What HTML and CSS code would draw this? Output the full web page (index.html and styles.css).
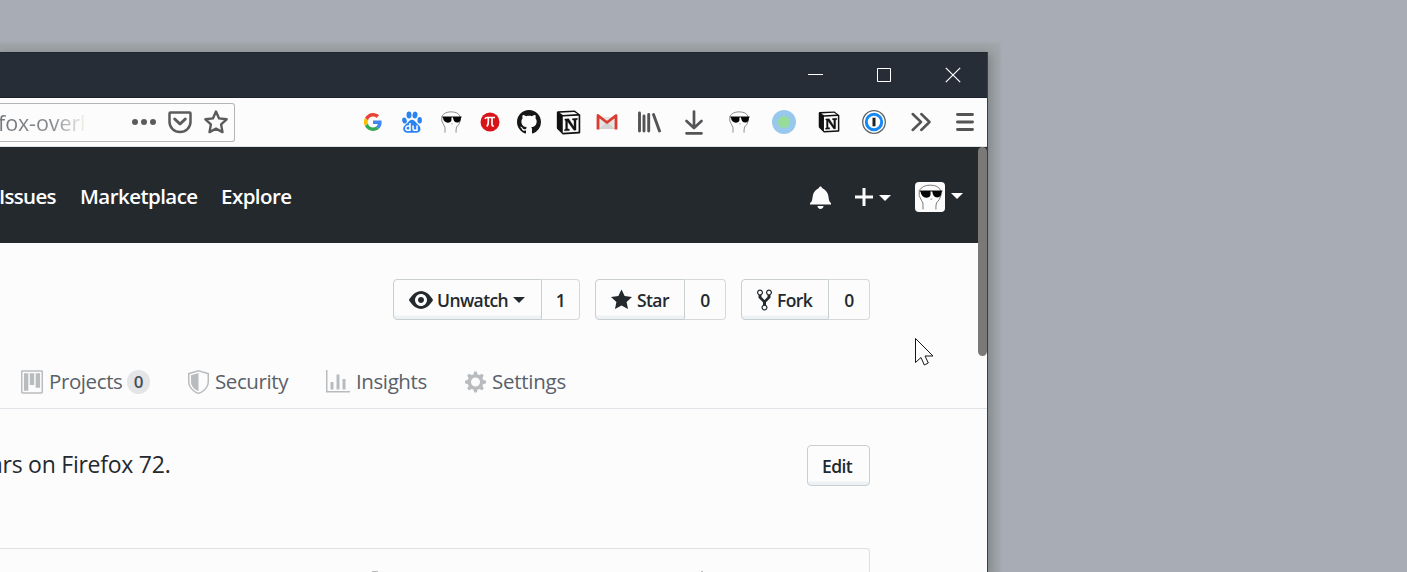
FILE: index.html
```html
<!DOCTYPE html>
<html lang="en">
<head>
<meta charset="utf-8">
<title>Browser window</title>
<link rel="stylesheet" href="styles.css">
</head>
<body>
<svg class="defs" width="0" height="0" aria-hidden="true">
  <symbol id="face" viewBox="0 0 26 26">
    <path d="M6.500 24.500V21.500Q7 18.500 5 16Q2 12 3 7Q6 2 13 2Q21 2 22.800 7Q24.200 12 21.500 15.500Q18 18.500 18.500 21.500V24.500" fill="#fcfcfc" stroke="#777" stroke-width=".9"/>
    <path d="M3.500 7.500H24.500" stroke="#111" stroke-width="1"/>
    <path d="M4 7.500h9.500v3.500q-.5 2.700-4 2.700-4.300 0-5.500-6.200zM15 7.500h9q-.3 6-4.300 6-4 0-4.700-6z" fill="#050505"/>
    <path d="M13.500 15h1.500" stroke="#999"/>
  </symbol>
  <symbol id="notion" viewBox="0 0 24 24">
    <path d="M1.500 1.200 18 .5 23.300 4.500V21.500q0 1-1 1.100L6.500 23.500 1.500 18.500Q.8 18 .8 17V2.200z" fill="#111"/>
    <path d="M3.500 2.600 17.500 1.900 20.500 3.900 6.500 4.700z" fill="#fcfcfc"/>
    <path d="M6.500 6.300 21.700 5.500V20.900L6.500 21.800z" fill="#fcfcfc"/>
    <path d="M8.500 8.700 12.200 8.500 17.300 16.300V9.800L15.800 9.500V8.300L20.500 8V9.200L19.200 9.700V19.300L17.200 19.500 11 10.800V18L12.800 18.400V19.700L8.200 20V18.800L9.300 18.200V10.200L8.500 9.800z" fill="#111" stroke="#111" stroke-width=".4"/>
  </symbol>
</svg>

<main class="window">
  <header class="titlebar">
    <svg class="control" viewBox="0 0 16 16"><path d="M1 7.500h15" stroke="#fff"/></svg>
    <svg class="control" viewBox="0 0 16 16"><path d="M1.500 1.500h13v13h-13z" fill="none" stroke="#fff"/></svg>
    <svg class="control" viewBox="0 0 16 16"><path d="M.8.800 15.200 15.200M15.200.800.800 15.200" stroke="#fff" stroke-width="1.200"/></svg>
  </header>

  <nav class="toolbar">
    <div class="urlbar">
      <span class="url">fox-overl</span>
      <svg class="url-icon" viewBox="0 0 24 24" fill="#5b5b5d"><circle cx="3" cy="12" r="3"/><circle cx="12" cy="12" r="3"/><circle cx="21" cy="12" r="3"/></svg>
      <svg class="url-icon" viewBox="0 0 24 24" fill="none" stroke="#5b5b5d" stroke-width="2.500"><path d="M2.500 2.500h19q1 0 1 1V12a10.500 10 0 0 1-21 0V3.500q0-1 1-1z"/><path d="M6.700 9l5.300 5 5.300-5" stroke-width="3" stroke-linecap="round" stroke-linejoin="round"/></svg>
      <svg class="url-icon" viewBox="0 0 24 24" fill="none" stroke="#5b5b5d" stroke-width="2.400" stroke-linejoin="round"><path d="M12 1.500l3.100 6.900 7.500.9-5.500 5.100 1.400 7.700L12 18.600l-6.500 3.500 1.400-7.700-5.500-5.100 7.500-.9z"/></svg>
    </div>
    <div class="bookmarks">
      <svg width="18" height="18" viewBox="0 0 48 48"><path fill="#ea4335" d="M24 9.500c3.500 0 6.700 1.200 9.200 3.600l6.900-6.900C35.900 2.400 30.500 0 24 0 14.600 0 6.500 5.400 2.600 13.200l8 6.200C12.400 13.700 17.700 9.500 24 9.500z"/><path fill="#4285f4" d="M47 24.600c0-1.600-.2-3.100-.4-4.600H24v9h12.900c-.6 3-2.300 5.500-4.800 7.200l7.700 6C44.400 38 47 31.800 47 24.600z"/><path fill="#fbbc05" d="M10.500 28.600a14.500 14.500 0 0 1 0-9.200l-8-6.200a24 24 0 0 0 0 21.600z"/><path fill="#34a853" d="M24 48c6.500 0 11.900-2.100 15.900-5.800l-7.700-6c-2.200 1.400-4.900 2.300-8.200 2.300-6.300 0-11.600-4.200-13.500-9.900l-8 6.200C6.500 42.600 14.600 48 24 48z"/></svg>
      <svg width="22" height="22" viewBox="0 0 22 22"><g fill="#2b83f2"><ellipse cx="3.500" cy="9.500" rx="2.300" ry="3.100" transform="rotate(-12 3.500 9.500)"/><ellipse cx="8" cy="4" rx="2.500" ry="3.400"/><ellipse cx="14" cy="4" rx="2.500" ry="3.400" transform="rotate(10 14 4)"/><ellipse cx="18.700" cy="9.200" rx="2.200" ry="3.200"/><path d="M11 8.800c2 0 3 1.700 4.500 3.200 2 2 4 3.400 4 6 0 2.500-2 3.700-4 3.700H6.500c-2.300 0-4.300-1.300-4.300-3.900 0-2.500 2-3.900 4.200-5.800C7.900 10.500 9 8.800 11 8.800z"/></g><g fill="none" stroke="#fff" stroke-width="1.500"><path d="M9 12v7.200H6.600q-2-.2-1.800-2.200.2-1.900 2-1.900H9M12 14.500v3.200q0 1.500 1.400 1.500H16v-4.700"/></g></svg>
      <svg width="24" height="24"><use href="#face"/></svg>
      <svg width="20" height="20" viewBox="0 0 20 20"><circle cx="10" cy="10" r="9.500" fill="#d91419"/><path d="M5 6.900q.5-1.400 2-1.400h8M8.300 6v4q0 3-1.500 4.500M12 6v6.200q0 2.100 1.800 1.700" fill="none" stroke="#fff" stroke-width="1.700"/></svg>
      <svg width="24" height="24" viewBox="0 0 16 16"><path fill="#161618" d="M8 0C3.580 0 0 3.580 0 8c0 3.540 2.290 6.530 5.470 7.590.4.070.55-.17.55-.38 0-.19-.01-.82-.01-1.490-2.010.37-2.530-.49-2.690-.94-.09-.23-.48-.94-.82-1.130-.28-.15-.68-.52-.01-.53.630-.01 1.080.58 1.230.82.720 1.210 1.870.87 2.330.66.070-.52.280-.87.510-1.070-1.780-.2-3.640-.89-3.640-3.950 0-.87.310-1.590.82-2.150-.08-.2-.36-1.020.08-2.120 0 0 .67-.21 2.200.82.640-.18 1.320-.27 2-.27s1.360.09 2 .27c1.530-1.040 2.200-.82 2.200-.82.440 1.100.16 1.920.08 2.120.51.560.82 1.270.82 2.150 0 3.070-1.870 3.750-3.650 3.950.29.250.54.730.54 1.480 0 1.070-.01 1.930-.01 2.200 0 .21.150.46.550.38A8.010 8.010 0 0 0 16 8c0-4.420-3.580-8-8-8z"/></svg>
      <svg width="25" height="25"><use href="#notion"/></svg>
      <svg width="22" height="18" viewBox="0 0 22 18"><path d="M3 4h16v12H3z" fill="#e4e4e4"/><path d="M3 16l8-7 8 7" fill="#d2d2d2"/><path d="M2 16.500V2.500l9 7 9-7v14" fill="none" stroke="#d93c31" stroke-width="2.800" stroke-linejoin="round"/></svg>
    </div>
    <div class="actions">
      <svg width="24" height="24" viewBox="0 0 24 24" stroke="#545457" stroke-width="2.900" stroke-linecap="round"><path d="M2.500 3v18M7 6v15M11.700 4.500V21M16.500 4.500 22.500 21"/></svg>
      <svg width="24" height="26" viewBox="0 0 24 26" fill="none" stroke="#545457" stroke-width="2.700" stroke-linecap="round" stroke-linejoin="round"><path d="M12 2.500v16M4.500 12l7.500 7 7.500-7M4.500 24.300h15"/></svg>
      <svg width="24" height="24"><use href="#face"/></svg>
      <svg width="24" height="24" viewBox="0 0 24 24"><circle cx="12" cy="12" r="12" fill="#98c9ed"/><circle cx="12" cy="12" r="6" fill="#98dc9a"/></svg>
      <svg width="22" height="22"><use href="#notion"/></svg>
      <svg width="24" height="24" viewBox="0 0 24 24"><circle cx="12" cy="12" r="11.300" fill="#fff" stroke="#626466" stroke-width="1.300"/><circle cx="12" cy="12" r="7.700" fill="#fff" stroke="#1688f5" stroke-width="3"/><path d="M12 7.700v8.600" stroke="#222" stroke-width="3"/></svg>
      <svg class="nudge" width="20" height="20" viewBox="0 0 20 20" fill="none" stroke="#545457" stroke-width="2.500" stroke-linecap="round" stroke-linejoin="round"><path d="M1.700 2 10 10l-8.300 8M10.300 2l8.200 8-8.200 8"/></svg>
      <svg class="menu" width="18" height="20" viewBox="0 0 18 20" stroke="#545457" stroke-width="2.900" stroke-linecap="round"><path d="M1.500 2.500h15M1.500 10h15M1.500 17.500h15"/></svg>
    </div>
  </nav>

  <header class="site-header">
    <a class="issues">Issues</a><a class="market">Marketplace</a><a class="explore">Explore</a>
    <svg class="bell" viewBox="0 0 14 16"><path d="M14 12v1H0v-1l.73-.58c.77-.77.81-2.550 1.190-4.420C2.690 3.230 6 2 6 2c0-.55.45-1 1-1s1 .45 1 1c0 0 3.390 1.230 4.160 5 .38 1.880.42 3.660 1.190 4.420l.66.580H14zm-7 4c1.110 0 2-.89 2-2H5c0 1.110.89 2 2 2z"/></svg>
    <svg class="plus" viewBox="0 0 12 16"><path d="M12 9H7v5H5V9H0V7h5V2h2v5h5v2z"/></svg>
    <i class="caret"></i>
    <svg class="avatar" viewBox="0 0 30 30"><use href="#face" x="1" y="1" width="28" height="28"/></svg>
    <i class="caret raised"></i>
  </header>

  <section class="content">
    <div class="repo-actions">
      <div class="button-group">
        <button class="btn watch"><svg width="24" height="24" viewBox="0 0 16 16"><path d="M8.060 2C3 2 0 8 0 8s3 6 8.060 6C13 14 16 8 16 8s-3-6-7.940-6zM8 12c-2.200 0-4-1.780-4-4 0-2.200 1.800-4 4-4 2.220 0 4 1.800 4 4 0 2.220-1.780 4-4 4zm2-4c0 1.110-.89 2-2 2-1.110 0-2-.89-2-2 0-1.110.89-2 2-2 1.110 0 2 .89 2 2z"/></svg><span>Unwatch</span><i class="caret"></i></button><span class="count">1</span>
      </div>
      <div class="button-group">
        <button class="btn star"><svg width="21" height="24" viewBox="0 0 14 16"><path d="M14 6l-4.900-.64L7 1 4.900 5.360 0 6l3.600 3.260L2.670 14 7 11.670 11.330 14l-.93-4.740L14 6z"/></svg><span>Star</span></button><span class="count wide">0</span>
      </div>
      <div class="button-group">
        <button class="btn fork"><svg width="15" height="24" viewBox="0 0 10 16"><path d="M8 1a1.993 1.993 0 0 0-1 3.720V6L5 8 3 6V4.720A1.993 1.993 0 0 0 2 1a1.993 1.993 0 0 0-1 3.720V6.500l3 3v1.780A1.993 1.993 0 0 0 5 15a1.993 1.993 0 0 0 1-3.720V9.500l3-3V4.720A1.993 1.993 0 0 0 8 1zM2 4.200C1.340 4.200.8 3.650.8 3c0-.65.55-1.200 1.200-1.200.65 0 1.200.55 1.200 1.200 0 .65-.55 1.200-1.200 1.200zm3 10c-.66 0-1.200-.55-1.200-1.200 0-.65.55-1.200 1.200-1.200.65 0 1.200.55 1.200 1.200 0 .65-.55 1.200-1.200 1.200zm3-10c-.66 0-1.200-.55-1.200-1.200 0-.65.55-1.200 1.200-1.200.65 0 1.200.55 1.200 1.200 0 .65-.55 1.200-1.200 1.200z"/></svg><span>Fork</span></button><span class="count wide">0</span>
      </div>
    </div>
    <div class="tabs">
      <a class="tab projects"><svg width="22" height="24" viewBox="0 0 15 16"><path fill-rule="evenodd" d="M10 12h3V2h-3v10zm-4-2h3V2H6v8zm-4 4h3V2H2v12zm-1 1h13V1H1v14zM14 0H1a1 1 0 0 0-1 1v14a1 1 0 0 0 1 1h13a1 1 0 0 0 1-1V1a1 1 0 0 0-1-1z"/></svg><span>Projects</span><b class="pill">0</b></a>
      <a class="tab security"><svg width="21" height="24" viewBox="0 0 14 16"><path fill-rule="evenodd" d="M0 2l7-2 7 2v6.020C14 12.690 8.690 16 7 16c-1.690 0-7-3.310-7-7.980V2zm1 .75L7 1l6 1.750v5.268C13 12.104 8.449 15 7 15c-1.449 0-6-2.896-6-6.982V2.750zm1 .75L7 2v12c-1.207 0-5-2.482-5-5.985V3.500z"/></svg><span>Security</span></a>
      <a class="tab insights"><svg width="24" height="24" viewBox="0 0 16 16"><path d="M16 14v1H0V0h1v14h15zM5 13H3V8h2v5zm4 0H7V3h2v10zm4 0h-2V6h2v7z"/></svg><span>Insights</span></a>
      <a class="tab settings"><svg width="21" height="24" viewBox="0 0 14 16"><path d="M14 8.770v-1.600l-1.940-.64-.45-1.090.88-1.840-1.130-1.130-1.810.91-1.090-.45-.69-1.920h-1.600l-.63 1.940-1.110.45-1.840-.88-1.130 1.130.91 1.810-.45 1.090L0 7.230v1.590l1.940.64.45 1.090-.88 1.840 1.130 1.130 1.810-.91 1.090.45.69 1.920h1.590l.63-1.940 1.110-.45 1.840.88 1.130-1.130-.92-1.810.47-1.090L14 8.750v.02zM7 11c-1.660 0-3-1.340-3-3s1.340-3 3-3 3 1.340 3 3-1.340 3-3 3z"/></svg><span>Settings</span></a>
    </div>
    <div class="description"><span>ars on Firefox 72.</span><button class="btn edit"><span>Edit</span></button></div>
    <div class="summary"><i class="tip branch"></i><i class="tip people"></i></div>
  </section>

  <div class="scrollbar"></div>
  <svg class="cursor" viewBox="0 0 19 28"><path d="M.5.500V24.500L6 19.500 9.300 27 13.300 25 10 18H18z" fill="#fff" stroke="#15151f"/></svg>
</main>
</body>
</html>
```
FILE: styles.css
```css
* { box-sizing: border-box; }
body {
  margin: 0;
  height: 572px;
  padding-top: 52px;
  overflow: hidden;
  background: #a8acb4;
  font-family: "Open Sans", "Noto Sans", sans-serif;
}
svg { display: block; flex: none; }
.defs { position: absolute; }

.window {
  position: relative;
  width: 988px;
  height: 520px;
  border-right: 1px solid #3b3f45;
  background: #fcfcfc;
  box-shadow: 0 4px 10px 3px rgba(78, 84, 84, .42), 0 3px 2px 12px rgba(146, 152, 148, .3);
}
.titlebar {
  display: flex;
  justify-content: flex-end;
  align-items: center;
  gap: 53px;
  height: 46px;
  padding-right: 26px;
  border-top: 1px solid #20262d;
  border-bottom: 1px solid #1c2229;
  background: #272d37;
}
.control { width: 16px; height: 16px; }

.toolbar {
  display: flex;
  align-items: center;
  height: 49px;
  border-bottom: 1px solid #dfe3e5;
}
.urlbar {
  display: flex;
  align-items: center;
  gap: 12px;
  width: 235px;
  height: 39px;
  padding-right: 6px;
  border: 1px solid #b5b5b7;
  border-left: 0;
  border-radius: 0 3px 3px 0;
}
.url {
  width: 122px;
  margin-left: -2px;
  font-size: 21.500px;
  letter-spacing: -.1px;
  white-space: nowrap;
  color: transparent;
  background: linear-gradient(90deg, #71777b 0, #858b8e 55px, #f2efe8 86px);
  background-clip: text;
  -webkit-background-clip: text;
}
.url-icon { width: 24px; height: 24px; }
.bookmarks {
  display: grid;
  grid-template-columns: repeat(7, 39px);
  place-items: center;
  margin-left: 118.5px;
}
.actions {
  display: grid;
  grid-template-columns: repeat(8, 45px);
  place-items: center;
}
.nudge { margin-left: 3px; }
.menu { margin-left: 2px; }

.site-header {
  display: flex;
  align-items: center;
  height: 96px;
  padding-top: 3px;
  background: #24292e;
  color: #fff;
  font-size: 20.500px;
  font-weight: 600;
}
.site-header a { margin-top: -1px; white-space: nowrap; }
.site-header svg { fill: #fcfcfc; }
.issues { width: 81px; margin-left: -1px; letter-spacing: -.7px; }
.market { width: 141px; letter-spacing: -.55px; }
.explore { width: 589px; letter-spacing: -.55px; }
.bell { width: 21px; height: 24px; margin-right: 24px; }
.plus { width: 18px; height: 24px; margin-right: 6px; }
.caret {
  width: 0;
  border: 6px solid transparent;
  border-top-color: currentColor;
  border-bottom: 0;
}
.site-header .caret { margin-top: 3px; }
.site-header .raised { margin-top: -1px; }
.avatar {
  width: 30px;
  height: 30px;
  margin: 1px 6px 0 24px;
  border-radius: 4px;
  background: #fcfcfc;
}

.content { color: #24292e; }
.repo-actions {
  display: flex;
  justify-content: flex-end;
  gap: 15px;
  padding: 36px 117px 0 0;
}
.button-group { display: flex; }
.btn, .count {
  display: flex;
  align-items: center;
  height: 41px;
  margin: 0;
  border: 1px solid #c9ced0;
  font: 600 17.500px "Open Sans", "Noto Sans", sans-serif;
  letter-spacing: -.6px;
  color: #24292e;
}
.btn {
  padding: 0 0 0 15px;
  border-radius: 4px 0 0 4px;
  background: linear-gradient(#fcfcfc 35px, #edf2f5 36px);
  white-space: nowrap;
}
.btn svg { fill: #24292e; }
.btn span { margin-left: 5px; padding-top: 1px; }
.watch { width: 149px; }
.watch span { margin-left: 4px; }
.watch .caret { margin: 1px 0 0 5px; }
.star { width: 90px; }
.fork { width: 88px; }
.count {
  justify-content: center;
  width: 38px;
  padding-top: 1px;
  border-left: 0;
  border-color: #d6d9db;
  border-radius: 0 4px 4px 0;
}
.count.wide { width: 41px; }

.tabs {
  display: flex;
  align-items: center;
  height: 89px;
  padding: 36px 0 0 21px;
  border-bottom: 1px solid #e1e4e8;
  font-size: 20.500px;
  color: #586069;
}
.tab { display: flex; align-items: center; white-space: nowrap; letter-spacing: -.4px; }
.tab svg { fill: #b9bcbe; }
.tab > span { margin: -2px 0 0 6px; }
.projects { width: 167px; }
.projects > span { width: 72px; }
.security { width: 138px; }
.insights { width: 139px; }
.settings { letter-spacing: -.25px; }
.pill {
  width: 23px;
  height: 24px;
  margin-left: 6px;
  border-radius: 12px;
  background: #e4e5e7;
  color: #444d56;
  font-size: 17px;
  font-weight: 600;
  line-height: 24px;
  text-align: center;
}

.description {
  display: flex;
  align-items: center;
  justify-content: space-between;
  padding: 36px 117px 0 0;
  font-size: 23px;
}
.description > span { margin: -3px 0 0 -10px; letter-spacing: -.25px; }
.edit { width: 63px; padding-left: 10px; border-radius: 4px; }
.edit span { margin-left: 4px; }
.summary {
  display: flex;
  align-items: flex-start;
  width: 870px;
  height: 24px;
  margin-top: 62px;
  padding-top: 22px;
  border: 1px solid #dedfe1;
  border-width: 1px 1px 0 0;
  border-radius: 0 4px 0 0;
}
.tip { height: 1px; background: #b9bbbd; }
.branch { width: 6px; margin-left: 372px; }
.people { width: 2px; margin-left: 323px; }

.scrollbar {
  position: absolute;
  top: 95px;
  right: 0;
  width: 9px;
  height: 209px;
  border-radius: 5px;
  background: #7b7978;
}
.cursor {
  position: absolute;
  top: 286px;
  left: 915px;
  width: 19px;
  height: 28px;
}
```
